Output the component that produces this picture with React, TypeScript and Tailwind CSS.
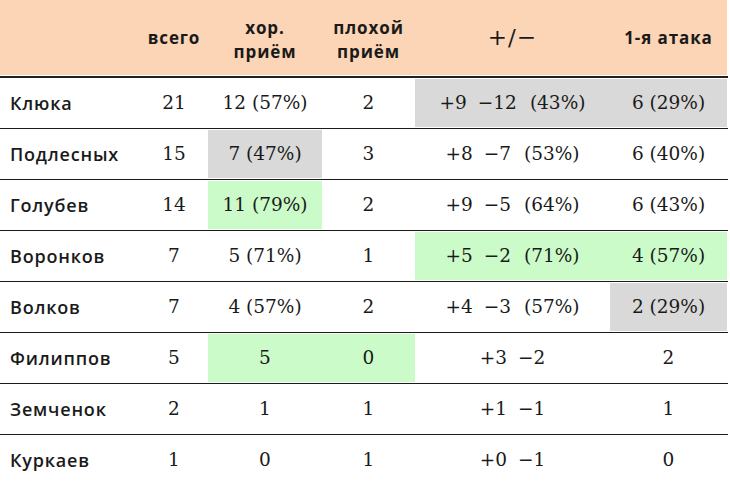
import React from "react";

type Cell = { v: React.ReactNode; bg?: "g" | "gr" };

const cols = "grid-cols-[140px_68px_114px_93px_195px_117px]";

const PM = ({ p, m, pct }: { p: string; m: string; pct?: string }) => (
  <span className="whitespace-pre">
    {p}
    <span className="ml-[11px]">{"\u2212" + m}</span>
    {pct && <span className="ml-[13px]">{pct}</span>}
  </span>
);

const rows: { name: string; cells: Cell[] }[] = [
  { name: "Клюка", cells: [{ v: "21" }, { v: "12 (57%)" }, { v: "2" }, { v: <PM p="+9" m="12" pct="(43%)" />, bg: "gr" }, { v: "6 (29%)", bg: "gr" }] },
  { name: "Подлесных", cells: [{ v: "15" }, { v: "7 (47%)", bg: "gr" }, { v: "3" }, { v: <PM p="+8" m="7" pct="(53%)" /> }, { v: "6 (40%)" }] },
  { name: "Голубев", cells: [{ v: "14" }, { v: "11 (79%)", bg: "g" }, { v: "2" }, { v: <PM p="+9" m="5" pct="(64%)" /> }, { v: "6 (43%)" }] },
  { name: "Воронков", cells: [{ v: "7" }, { v: "5 (71%)" }, { v: "1" }, { v: <PM p="+5" m="2" pct="(71%)" />, bg: "g" }, { v: "4 (57%)", bg: "g" }] },
  { name: "Волков", cells: [{ v: "7" }, { v: "4 (57%)" }, { v: "2" }, { v: <PM p="+4" m="3" pct="(57%)" /> }, { v: "2 (29%)", bg: "gr" }] },
  { name: "Филиппов", cells: [{ v: "5" }, { v: "5", bg: "g" }, { v: "0", bg: "g" }, { v: <PM p="+3" m="2" /> }, { v: "2" }] },
  { name: "Земченок", cells: [{ v: "2" }, { v: "1" }, { v: "1" }, { v: <PM p="+1" m="1" /> }, { v: "1" }] },
  { name: "Куркаев", cells: [{ v: "1" }, { v: "0" }, { v: "1" }, { v: <PM p="+0" m="1" /> }, { v: "0" }] },
];

const sans = "font-['Open_Sans','DejaVu_Sans',sans-serif]";
const serif = "font-['DejaVu_Serif','Liberation_Serif',serif]";

export default function App() {
  return (
    <div className="w-[730px] h-[484px] bg-white overflow-hidden text-[#1a1a1a]">
      <div className="w-[728px]">
        <div className={`grid ${cols} h-[78px] border-b-2 border-[#222] pb-[1px]`}>
          {[
            "",
            "всего",
            "хор.\nприём",
            "плохой\nприём",
            "+/\u2212",
            "1-я атака",
          ].map((h, i) => (
            <div
              key={i}
              className={`bg-[#fbd5b6] flex items-center justify-center text-center whitespace-pre-line ${
                i === 4
                  ? `${serif} text-[23px] font-normal tracking-[1px]`
                  : `${sans} text-[17px] font-bold leading-[24px] tracking-[0.9px]`
              } ${i === 2 || i === 3 ? "pt-[4px]" : ""}`}
            >
              {h}
            </div>
          ))}
        </div>
        {rows.map((r) => (
          <div key={r.name} className={`grid ${cols} h-[51px] border-b border-[#1a1a1a] py-[1px]`}>
            <div className={`flex items-center pl-[10px] ${sans} text-[18px] font-semibold tracking-[0.8px]`}>{r.name}</div>
            {r.cells.map((c, j) => (
              <div
                key={j}
                className={`flex items-center justify-center ${serif} text-[18.5px] ${
                  c.bg === "g" ? "bg-[#cbfbc8]" : c.bg === "gr" ? "bg-[#d9d9d9]" : ""
                }`}
              >
                {c.v}
              </div>
            ))}
          </div>
        ))}
      </div>
    </div>
  );
}
